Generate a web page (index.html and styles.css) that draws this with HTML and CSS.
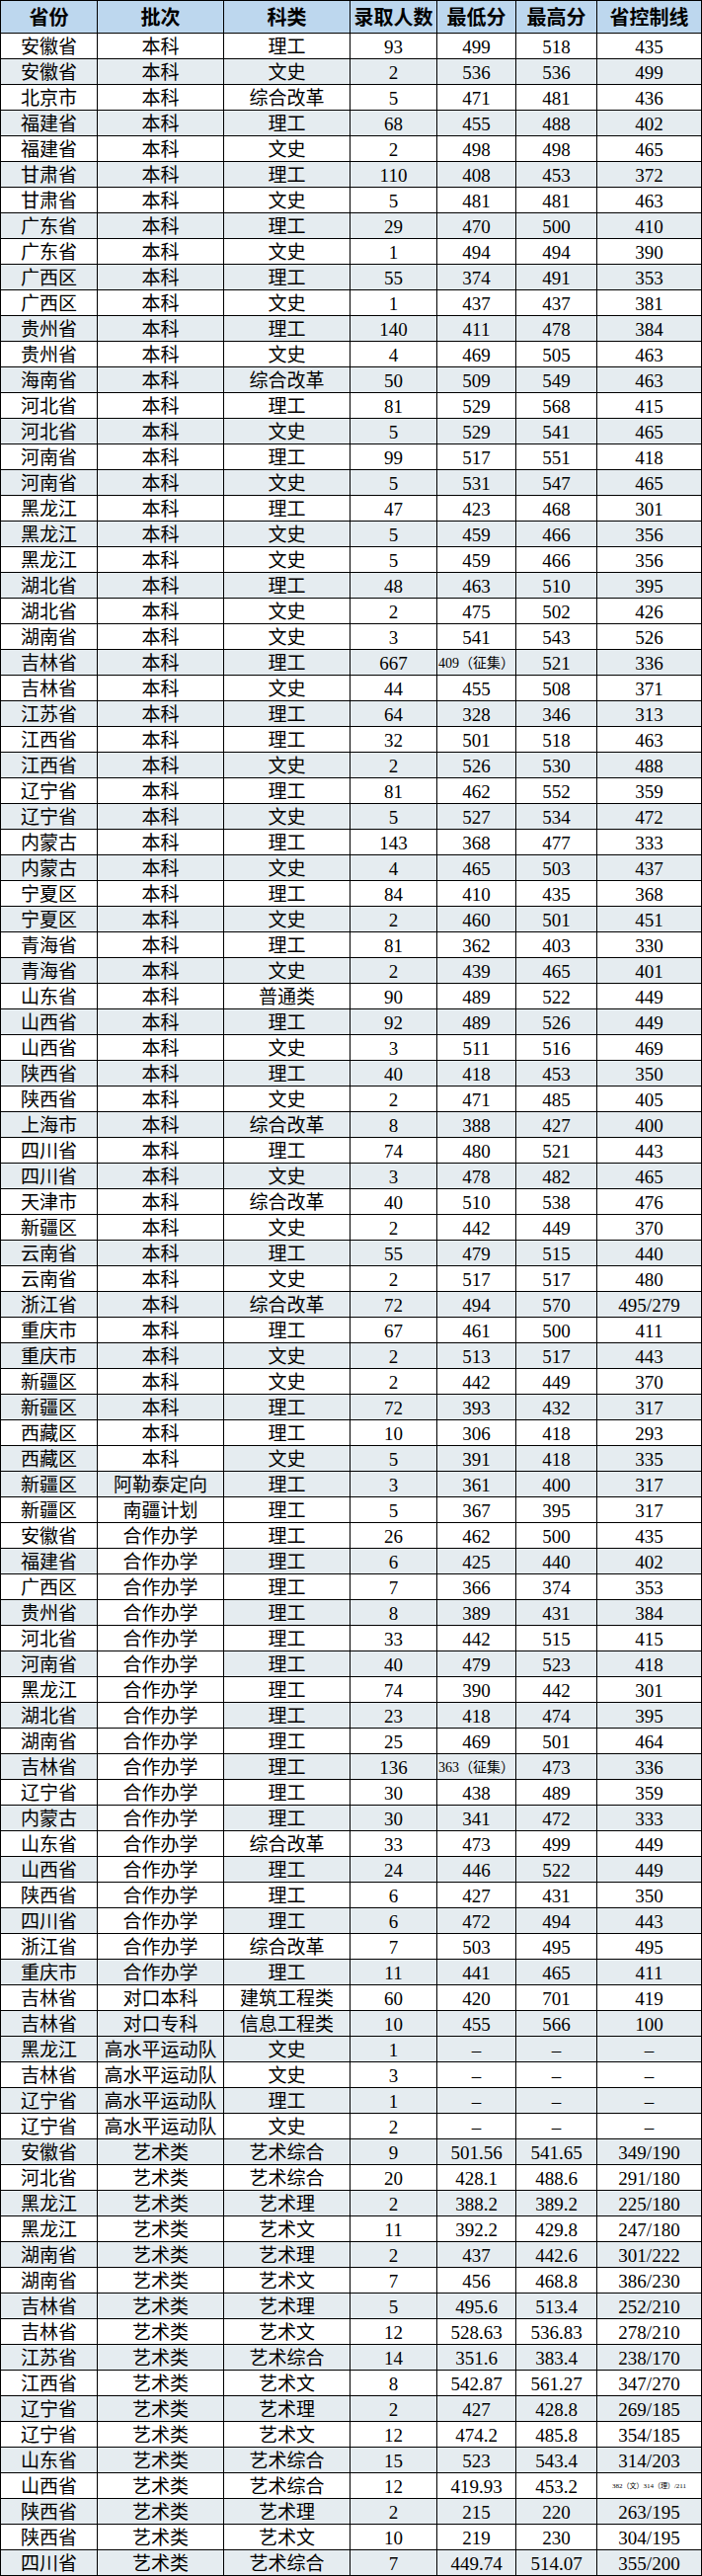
FILE: index.html
```html
<!DOCTYPE html>
<html lang="zh-CN">
<head>
<meta charset="utf-8">
<title>录取分数</title>
<link rel="stylesheet" href="styles.css">
</head>
<body>
<div class="table">
<div class="row head"><div>省份</div><div>批次</div><div>科类</div><div>录取人数</div><div>最低分</div><div>最高分</div><div>省控制线</div></div>
<div class="row"><div>安徽省</div><div>本科</div><div>理工</div><div>93</div><div>499</div><div>518</div><div>435</div></div>
<div class="row g"><div>安徽省</div><div>本科</div><div>文史</div><div>2</div><div>536</div><div>536</div><div>499</div></div>
<div class="row"><div>北京市</div><div>本科</div><div>综合改革</div><div>5</div><div>471</div><div>481</div><div>436</div></div>
<div class="row g"><div>福建省</div><div>本科</div><div>理工</div><div>68</div><div>455</div><div>488</div><div>402</div></div>
<div class="row"><div>福建省</div><div>本科</div><div>文史</div><div>2</div><div>498</div><div>498</div><div>465</div></div>
<div class="row g"><div>甘肃省</div><div>本科</div><div>理工</div><div>110</div><div>408</div><div>453</div><div>372</div></div>
<div class="row"><div>甘肃省</div><div>本科</div><div>文史</div><div>5</div><div>481</div><div>481</div><div>463</div></div>
<div class="row g"><div>广东省</div><div>本科</div><div>理工</div><div>29</div><div>470</div><div>500</div><div>410</div></div>
<div class="row"><div>广东省</div><div>本科</div><div>文史</div><div>1</div><div>494</div><div>494</div><div>390</div></div>
<div class="row g"><div>广西区</div><div>本科</div><div>理工</div><div>55</div><div>374</div><div>491</div><div>353</div></div>
<div class="row"><div>广西区</div><div>本科</div><div>文史</div><div>1</div><div>437</div><div>437</div><div>381</div></div>
<div class="row g"><div>贵州省</div><div>本科</div><div>理工</div><div>140</div><div>411</div><div>478</div><div>384</div></div>
<div class="row"><div>贵州省</div><div>本科</div><div>文史</div><div>4</div><div>469</div><div>505</div><div>463</div></div>
<div class="row g"><div>海南省</div><div>本科</div><div>综合改革</div><div>50</div><div>509</div><div>549</div><div>463</div></div>
<div class="row"><div>河北省</div><div>本科</div><div>理工</div><div>81</div><div>529</div><div>568</div><div>415</div></div>
<div class="row g"><div>河北省</div><div>本科</div><div>文史</div><div>5</div><div>529</div><div>541</div><div>465</div></div>
<div class="row"><div>河南省</div><div>本科</div><div>理工</div><div>99</div><div>517</div><div>551</div><div>418</div></div>
<div class="row g"><div>河南省</div><div>本科</div><div>文史</div><div>5</div><div>531</div><div>547</div><div>465</div></div>
<div class="row"><div>黑龙江</div><div>本科</div><div>理工</div><div>47</div><div>423</div><div>468</div><div>301</div></div>
<div class="row g"><div>黑龙江</div><div>本科</div><div>文史</div><div>5</div><div>459</div><div>466</div><div>356</div></div>
<div class="row"><div>黑龙江</div><div>本科</div><div>文史</div><div>5</div><div>459</div><div>466</div><div>356</div></div>
<div class="row g"><div>湖北省</div><div>本科</div><div>理工</div><div>48</div><div>463</div><div>510</div><div>395</div></div>
<div class="row"><div>湖北省</div><div>本科</div><div>文史</div><div>2</div><div>475</div><div>502</div><div>426</div></div>
<div class="row"><div>湖南省</div><div>本科</div><div>文史</div><div>3</div><div>541</div><div>543</div><div>526</div></div>
<div class="row g"><div>吉林省</div><div>本科</div><div>理工</div><div>667</div><div class="small">409（征集）</div><div>521</div><div>336</div></div>
<div class="row"><div>吉林省</div><div>本科</div><div>文史</div><div>44</div><div>455</div><div>508</div><div>371</div></div>
<div class="row g"><div>江苏省</div><div>本科</div><div>理工</div><div>64</div><div>328</div><div>346</div><div>313</div></div>
<div class="row"><div>江西省</div><div>本科</div><div>理工</div><div>32</div><div>501</div><div>518</div><div>463</div></div>
<div class="row g"><div>江西省</div><div>本科</div><div>文史</div><div>2</div><div>526</div><div>530</div><div>488</div></div>
<div class="row"><div>辽宁省</div><div>本科</div><div>理工</div><div>81</div><div>462</div><div>552</div><div>359</div></div>
<div class="row g"><div>辽宁省</div><div>本科</div><div>文史</div><div>5</div><div>527</div><div>534</div><div>472</div></div>
<div class="row"><div>内蒙古</div><div>本科</div><div>理工</div><div>143</div><div>368</div><div>477</div><div>333</div></div>
<div class="row g"><div>内蒙古</div><div>本科</div><div>文史</div><div>4</div><div>465</div><div>503</div><div>437</div></div>
<div class="row"><div>宁夏区</div><div>本科</div><div>理工</div><div>84</div><div>410</div><div>435</div><div>368</div></div>
<div class="row g"><div>宁夏区</div><div>本科</div><div>文史</div><div>2</div><div>460</div><div>501</div><div>451</div></div>
<div class="row"><div>青海省</div><div>本科</div><div>理工</div><div>81</div><div>362</div><div>403</div><div>330</div></div>
<div class="row g"><div>青海省</div><div>本科</div><div>文史</div><div>2</div><div>439</div><div>465</div><div>401</div></div>
<div class="row"><div>山东省</div><div>本科</div><div>普通类</div><div>90</div><div>489</div><div>522</div><div>449</div></div>
<div class="row g"><div>山西省</div><div>本科</div><div>理工</div><div>92</div><div>489</div><div>526</div><div>449</div></div>
<div class="row"><div>山西省</div><div>本科</div><div>文史</div><div>3</div><div>511</div><div>516</div><div>469</div></div>
<div class="row g"><div>陕西省</div><div>本科</div><div>理工</div><div>40</div><div>418</div><div>453</div><div>350</div></div>
<div class="row"><div>陕西省</div><div>本科</div><div>文史</div><div>2</div><div>471</div><div>485</div><div>405</div></div>
<div class="row g"><div>上海市</div><div>本科</div><div>综合改革</div><div>8</div><div>388</div><div>427</div><div>400</div></div>
<div class="row"><div>四川省</div><div>本科</div><div>理工</div><div>74</div><div>480</div><div>521</div><div>443</div></div>
<div class="row g"><div>四川省</div><div>本科</div><div>文史</div><div>3</div><div>478</div><div>482</div><div>465</div></div>
<div class="row"><div>天津市</div><div>本科</div><div>综合改革</div><div>40</div><div>510</div><div>538</div><div>476</div></div>
<div class="row"><div>新疆区</div><div>本科</div><div>文史</div><div>2</div><div>442</div><div>449</div><div>370</div></div>
<div class="row g"><div>云南省</div><div>本科</div><div>理工</div><div>55</div><div>479</div><div>515</div><div>440</div></div>
<div class="row"><div>云南省</div><div>本科</div><div>文史</div><div>2</div><div>517</div><div>517</div><div>480</div></div>
<div class="row g"><div>浙江省</div><div>本科</div><div>综合改革</div><div>72</div><div>494</div><div>570</div><div>495/279</div></div>
<div class="row"><div>重庆市</div><div>本科</div><div>理工</div><div>67</div><div>461</div><div>500</div><div>411</div></div>
<div class="row g"><div>重庆市</div><div>本科</div><div>文史</div><div>2</div><div>513</div><div>517</div><div>443</div></div>
<div class="row"><div>新疆区</div><div>本科</div><div>文史</div><div>2</div><div>442</div><div>449</div><div>370</div></div>
<div class="row g"><div>新疆区</div><div>本科</div><div>理工</div><div>72</div><div>393</div><div>432</div><div>317</div></div>
<div class="row"><div>西藏区</div><div>本科</div><div>理工</div><div>10</div><div>306</div><div>418</div><div>293</div></div>
<div class="row g"><div>西藏区</div><div class="w">本科</div><div>文史</div><div>5</div><div>391</div><div>418</div><div>335</div></div>
<div class="row g"><div>新疆区</div><div>阿勒泰定向</div><div>理工</div><div>3</div><div>361</div><div>400</div><div>317</div></div>
<div class="row"><div>新疆区</div><div>南疆计划</div><div>理工</div><div>5</div><div>367</div><div>395</div><div>317</div></div>
<div class="row"><div>安徽省</div><div>合作办学</div><div>理工</div><div>26</div><div>462</div><div>500</div><div>435</div></div>
<div class="row g"><div>福建省</div><div class="w">合作办学</div><div>理工</div><div>6</div><div>425</div><div>440</div><div>402</div></div>
<div class="row"><div>广西区</div><div>合作办学</div><div>理工</div><div>7</div><div>366</div><div>374</div><div>353</div></div>
<div class="row g"><div>贵州省</div><div class="w">合作办学</div><div>理工</div><div>8</div><div>389</div><div>431</div><div>384</div></div>
<div class="row"><div>河北省</div><div>合作办学</div><div>理工</div><div>33</div><div>442</div><div>515</div><div>415</div></div>
<div class="row g"><div>河南省</div><div class="w">合作办学</div><div>理工</div><div>40</div><div>479</div><div>523</div><div>418</div></div>
<div class="row"><div>黑龙江</div><div>合作办学</div><div>理工</div><div>74</div><div>390</div><div>442</div><div>301</div></div>
<div class="row g"><div>湖北省</div><div class="w">合作办学</div><div>理工</div><div>23</div><div>418</div><div>474</div><div>395</div></div>
<div class="row"><div>湖南省</div><div>合作办学</div><div>理工</div><div>25</div><div>469</div><div>501</div><div>464</div></div>
<div class="row g"><div>吉林省</div><div class="w">合作办学</div><div>理工</div><div>136</div><div class="small">363（征集）</div><div>473</div><div>336</div></div>
<div class="row"><div>辽宁省</div><div>合作办学</div><div>理工</div><div>30</div><div>438</div><div>489</div><div>359</div></div>
<div class="row g"><div>内蒙古</div><div class="w">合作办学</div><div>理工</div><div>30</div><div>341</div><div>472</div><div>333</div></div>
<div class="row"><div>山东省</div><div>合作办学</div><div>综合改革</div><div>33</div><div>473</div><div>499</div><div>449</div></div>
<div class="row g"><div>山西省</div><div class="w">合作办学</div><div>理工</div><div>24</div><div>446</div><div>522</div><div>449</div></div>
<div class="row"><div>陕西省</div><div>合作办学</div><div>理工</div><div>6</div><div>427</div><div>431</div><div>350</div></div>
<div class="row g"><div>四川省</div><div class="w">合作办学</div><div>理工</div><div>6</div><div>472</div><div>494</div><div>443</div></div>
<div class="row"><div>浙江省</div><div>合作办学</div><div>综合改革</div><div>7</div><div>503</div><div>495</div><div>495</div></div>
<div class="row g"><div>重庆市</div><div>合作办学</div><div>理工</div><div>11</div><div>441</div><div>465</div><div>411</div></div>
<div class="row"><div>吉林省</div><div>对口本科</div><div>建筑工程类</div><div>60</div><div>420</div><div>701</div><div>419</div></div>
<div class="row g"><div>吉林省</div><div>对口专科</div><div>信息工程类</div><div>10</div><div>455</div><div>566</div><div>100</div></div>
<div class="row g"><div>黑龙江</div><div>高水平运动队</div><div>文史</div><div>1</div><div>–</div><div>–</div><div>–</div></div>
<div class="row"><div>吉林省</div><div>高水平运动队</div><div>文史</div><div>3</div><div>–</div><div>–</div><div>–</div></div>
<div class="row g"><div>辽宁省</div><div>高水平运动队</div><div>理工</div><div>1</div><div>–</div><div>–</div><div>–</div></div>
<div class="row"><div>辽宁省</div><div>高水平运动队</div><div>文史</div><div>2</div><div>–</div><div>–</div><div>–</div></div>
<div class="row g"><div>安徽省</div><div>艺术类</div><div>艺术综合</div><div>9</div><div>501.56</div><div>541.65</div><div>349/190</div></div>
<div class="row"><div>河北省</div><div>艺术类</div><div>艺术综合</div><div>20</div><div>428.1</div><div>488.6</div><div>291/180</div></div>
<div class="row g"><div>黑龙江</div><div>艺术类</div><div>艺术理</div><div>2</div><div>388.2</div><div>389.2</div><div>225/180</div></div>
<div class="row"><div>黑龙江</div><div>艺术类</div><div>艺术文</div><div>11</div><div>392.2</div><div>429.8</div><div>247/180</div></div>
<div class="row g"><div>湖南省</div><div>艺术类</div><div>艺术理</div><div>2</div><div>437</div><div>442.6</div><div>301/222</div></div>
<div class="row"><div>湖南省</div><div>艺术类</div><div>艺术文</div><div>7</div><div>456</div><div>468.8</div><div>386/230</div></div>
<div class="row g"><div>吉林省</div><div>艺术类</div><div>艺术理</div><div>5</div><div>495.6</div><div>513.4</div><div>252/210</div></div>
<div class="row"><div>吉林省</div><div>艺术类</div><div>艺术文</div><div>12</div><div>528.63</div><div>536.83</div><div>278/210</div></div>
<div class="row g"><div>江苏省</div><div>艺术类</div><div>艺术综合</div><div>14</div><div>351.6</div><div>383.4</div><div>238/170</div></div>
<div class="row"><div>江西省</div><div>艺术类</div><div>艺术文</div><div>8</div><div>542.87</div><div>561.27</div><div>347/270</div></div>
<div class="row g"><div>辽宁省</div><div>艺术类</div><div>艺术理</div><div>2</div><div>427</div><div>428.8</div><div>269/185</div></div>
<div class="row"><div>辽宁省</div><div>艺术类</div><div>艺术文</div><div>12</div><div>474.2</div><div>485.8</div><div>354/185</div></div>
<div class="row g"><div>山东省</div><div>艺术类</div><div>艺术综合</div><div>15</div><div>523</div><div>543.4</div><div>314/203</div></div>
<div class="row"><div>山西省</div><div>艺术类</div><div>艺术综合</div><div>12</div><div>419.93</div><div>453.2</div><div class="tiny">382（文）314（理）/211</div></div>
<div class="row g"><div>陕西省</div><div>艺术类</div><div>艺术理</div><div>2</div><div>215</div><div>220</div><div>263/195</div></div>
<div class="row"><div>陕西省</div><div>艺术类</div><div>艺术文</div><div>10</div><div>219</div><div>230</div><div>304/195</div></div>
<div class="row g"><div>四川省</div><div>艺术类</div><div>艺术综合</div><div>7</div><div>449.74</div><div>514.07</div><div>355/200</div></div>
</div>
</body>
</html>
```

FILE: styles.css
```css
html, body {
  margin: 0;
  padding: 0;
  background: #ffffff;
}

.table {
  width: 711px;
  box-sizing: border-box;
  border-left: 1px solid #000;
  border-top: 1px solid #000;
  font-family: "Liberation Serif", "Noto Sans CJK SC", serif;
  font-size: 19px;
  color: #000;
}

.row {
  display: grid;
  grid-template-columns: 98px 128px 128px 88px 80px 82px 106px;
  height: 26px;
  background: #ffffff;
}

.row > div {
  box-sizing: border-box;
  border-right: 1px solid #000;
  border-bottom: 1px solid #000;
  display: flex;
  align-items: center;
  justify-content: center;
  white-space: nowrap;
  overflow: hidden;
  line-height: 1;
  padding-top: 2px;
}

.row.g {
  background: #e5ecf0;
}

.row.g > .w {
  background: #ffffff;
}

.row.head {
  height: 33px;
  background: #bdd7ee;
  font-family: "Noto Sans CJK SC", sans-serif;
  font-weight: 700;
  font-size: 20px;
}

.row.head > div {
  padding-top: 0;
}

.small {
  font-size: 14px;
}

.tiny {
  font-size: 7px;
}
```
